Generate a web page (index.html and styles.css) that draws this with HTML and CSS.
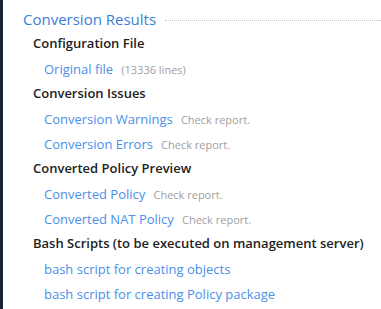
FILE: index.html
```html
<!DOCTYPE html>
<html lang="en">
<head>
    <meta charset="UTF-8">
    <title>Conversion Results</title>
    <link rel="stylesheet" href="styles.css">
</head>
<body>
    <div class="page">
        <div class="sidebar"></div>
        <div class="results">
            <div class="title-row">
                <h1 class="title">Conversion Results</h1>
                <span class="dots"></span>
            </div>

            <!-- Configuration File -->
            <h2 class="section">Configuration File</h2>
            <div class="item">
                <a href="#" class="link">Original file</a>
                <span class="note">(13336 lines)</span>
            </div>

            <!-- Conversion Issues -->
            <h2 class="section">Conversion Issues</h2>
            <div class="item">
                <a href="#" class="link">Conversion Warnings</a>
                <span class="note">Check report.</span>
            </div>
            <div class="item">
                <a href="#" class="link">Conversion Errors</a>
                <span class="note">Check report.</span>
            </div>

            <!-- Converted Policy Preview -->
            <h2 class="section">Converted Policy Preview</h2>
            <div class="item">
                <a href="#" class="link">Converted Policy</a>
                <span class="note">Check report.</span>
            </div>
            <div class="item">
                <a href="#" class="link">Converted NAT Policy</a>
                <span class="note">Check report.</span>
            </div>

            <!-- Bash Scripts -->
            <h2 class="section">Bash Scripts (to be executed on management server)</h2>
            <div class="item">
                <a href="#" class="link">bash script for creating objects</a>
            </div>
            <div class="item">
                <a href="#" class="link">bash script for creating Policy package</a>
            </div>
        </div>
    </div>
</body>
</html>
```

FILE: styles.css
```css
* {
    box-sizing: border-box;
    margin: 0;
    padding: 0;
    font-family: 'Open Sans', sans-serif;
}
body {
    background: #fff;
    width: 381px;
    height: 309px;
    overflow: hidden;
}
.page {
    display: flex;
    height: 309px;
}
.sidebar {
    width: 3px;
    background-color: #1b2330;
    flex-shrink: 0;
}
.results {
    flex: 1;
    padding: 6px 0 0 20px;
}
.title-row {
    display: flex;
    align-items: center;
    height: 25px;
}
.title {
    font-size: 15px;
    font-weight: 400;
    color: #3b7dd8;
    white-space: nowrap;
}
.dots {
    flex: 1;
    margin-left: 9px;
    margin-top: 3px;
    border-top: 1px dotted #c8c8c8;
}
.section {
    font-size: 13px;
    font-weight: 600;
    color: #222;
    height: 25px;
    line-height: 25px;
    padding-left: 10px;
    white-space: nowrap;
}
.item {
    height: 25px;
    line-height: 25px;
    padding-left: 21px;
    white-space: nowrap;
}
.link {
    font-size: 13px;
    color: #4a90e8;
    text-decoration: none;
}
.note {
    font-size: 11px;
    color: #a0a0a0;
    margin-left: 4px;
}
```
